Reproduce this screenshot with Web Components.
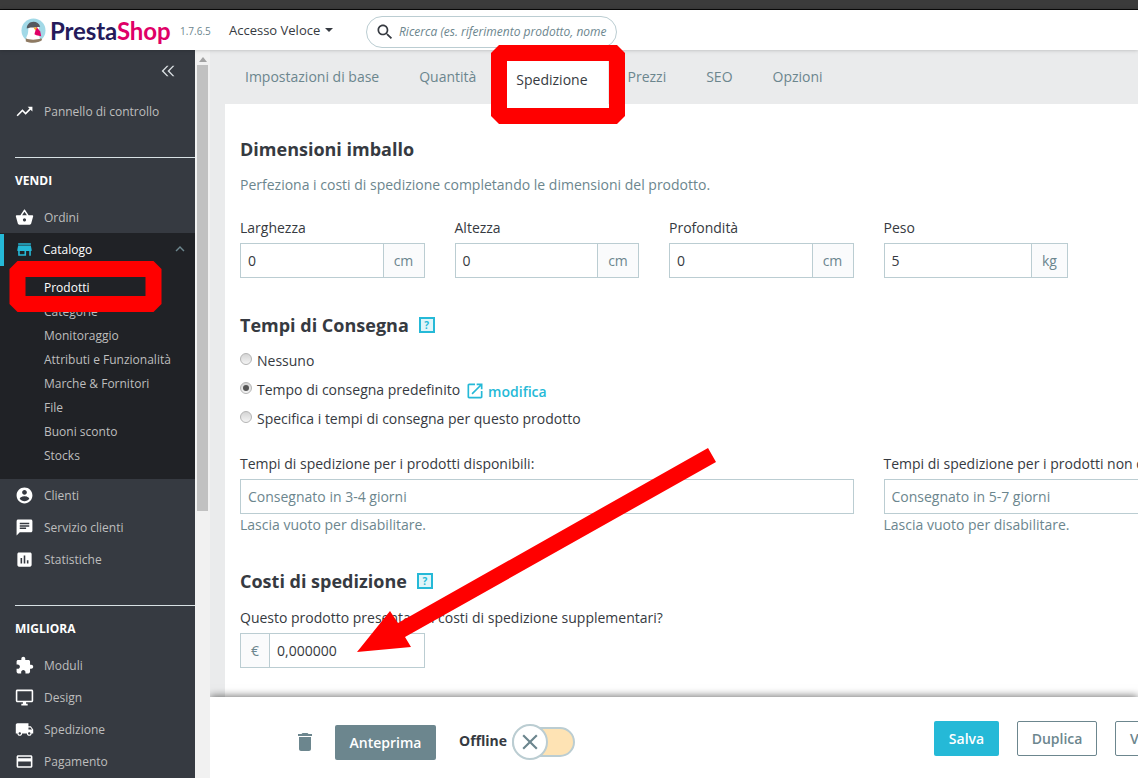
<!DOCTYPE html>
<html lang="it">
<head>
<meta charset="utf-8">
<title>PrestaShop</title>
<style>
  html, body { margin: 0; height: 100%; overflow: hidden; }
  body { font-family: "Open Sans", sans-serif; color: #363a41; background: #eaebec; }
</style>
</head>
<body>
<ps-page>
  <ps-header slot="header"></ps-header>
  <ps-sidebar slot="sidebar">
    <ps-nav-item icon="trend">Pannello di controllo</ps-nav-item>
    <ps-nav-title>VENDI</ps-nav-title>
    <ps-nav-item icon="basket">Ordini</ps-nav-item>
    <ps-nav-group icon="store" label="Catalogo">
      <ps-nav-sub active>Prodotti</ps-nav-sub>
      <ps-nav-sub>Categorie</ps-nav-sub>
      <ps-nav-sub>Monitoraggio</ps-nav-sub>
      <ps-nav-sub>Attributi e Funzionalità</ps-nav-sub>
      <ps-nav-sub>Marche &amp; Fornitori</ps-nav-sub>
      <ps-nav-sub>File</ps-nav-sub>
      <ps-nav-sub>Buoni sconto</ps-nav-sub>
      <ps-nav-sub>Stocks</ps-nav-sub>
    </ps-nav-group>
    <ps-nav-item icon="account">Clienti</ps-nav-item>
    <ps-nav-item icon="chat">Servizio clienti</ps-nav-item>
    <ps-nav-item icon="stats">Statistiche</ps-nav-item>
    <ps-nav-title>MIGLIORA</ps-nav-title>
    <ps-nav-item icon="puzzle">Moduli</ps-nav-item>
    <ps-nav-item icon="desktop">Design</ps-nav-item>
    <ps-nav-item icon="truck">Spedizione</ps-nav-item>
    <ps-nav-item icon="card">Pagamento</ps-nav-item>
  </ps-sidebar>
  <ps-scrollbar slot="scrollbar"></ps-scrollbar>
  <ps-tabs slot="tabs"></ps-tabs>
  <ps-shipping-form slot="content"></ps-shipping-form>
  <ps-footer slot="footer"></ps-footer>
</ps-page>
<ps-markup></ps-markup>

<script>
const ICONS = {
  trend: 'M16 6l2.29 2.29-4.88 4.88-4-4L2 16.59 3.41 18l6-6 4 4 6.3-6.29L22 12V6z',
  basket: 'M17.21 9l-4.38-6.56c-.19-.28-.51-.42-.83-.42-.32 0-.64.14-.83.43L6.79 9H2c-.55 0-1 .45-1 1 0 .09.01.18.04.27l2.54 9.27c.23.84 1 1.46 1.92 1.46h13c.92 0 1.69-.62 1.93-1.46l2.54-9.27L23 10c0-.55-.45-1-1-1h-4.79zM9 9l3-4.4L15 9H9zm3 8c-1.1 0-2-.9-2-2s.9-2 2-2 2 .9 2 2-.9 2-2 2z',
  store: 'M20 4H4v2h16V4zm1 10v-2l-1-5H4l-1 5v2h1v6h10v-6h4v6h2v-6h1zm-9 4H6v-4h6v4z',
  account: 'M12 2C6.48 2 2 6.48 2 12s4.48 10 10 10 10-4.48 10-10S17.52 2 12 2zm0 3c1.66 0 3 1.34 3 3s-1.34 3-3 3-3-1.34-3-3 1.34-3 3-3zm0 14.2c-2.5 0-4.71-1.28-6-3.22.03-1.99 4-3.08 6-3.08 1.99 0 5.97 1.09 6 3.08-1.29 1.94-3.5 3.22-6 3.22z',
  chat: 'M20 2H4c-1.1 0-1.99.9-1.99 2L2 22l4-4h14c1.1 0 2-.9 2-2V4c0-1.1-.9-2-2-2zM6 9h12v2H6V9zm8 5H6v-2h8v2zm4-6H6V6h12v2z',
  stats: 'M19 3H5c-1.1 0-2 .9-2 2v14c0 1.1.9 2 2 2h14c1.1 0 2-.9 2-2V5c0-1.1-.9-2-2-2zM9 17H7v-7h2v7zm4 0h-2V7h2v10zm4 0h-2v-4h2v4z',
  puzzle: 'M20.5 11H19V7c0-1.1-.9-2-2-2h-4V3.5C13 2.12 11.88 1 10.5 1S8 2.12 8 3.5V5H4c-1.1 0-1.99.9-1.99 2v3.8H3.5c1.49 0 2.7 1.21 2.7 2.7s-1.21 2.7-2.7 2.7H2V20c0 1.1.9 2 2 2h3.8v-1.5c0-1.49 1.21-2.7 2.7-2.7 1.49 0 2.7 1.21 2.7 2.7V22H17c1.1 0 2-.9 2-2v-4h1.5c1.38 0 2.5-1.12 2.5-2.5S21.88 11 20.5 11z',
  desktop: 'M21 2H3c-1.1 0-2 .9-2 2v12c0 1.1.9 2 2 2h7v2H8v2h8v-2h-2v-2h7c1.1 0 2-.9 2-2V4c0-1.1-.9-2-2-2zm0 14H3V4h18v12z',
  truck: 'M20 8h-3V4H3c-1.1 0-2 .9-2 2v11h2c0 1.66 1.34 3 3 3s3-1.34 3-3h6c0 1.66 1.34 3 3 3s3-1.34 3-3h2v-5l-3-4zM6 18.5c-.83 0-1.5-.67-1.5-1.5s.67-1.5 1.5-1.5 1.5.67 1.5 1.5-.67 1.5-1.5 1.5zm13.5-9l1.96 2.5H17V9.5h2.5zm-1.5 9c-.83 0-1.5-.67-1.5-1.5s.67-1.5 1.5-1.5 1.5.67 1.5 1.5-.67 1.5-1.5 1.5z',
  card: 'M20 4H4c-1.11 0-1.99.89-1.99 2L2 18c0 1.11.89 2 2 2h16c1.11 0 2-.89 2-2V6c0-1.11-.89-2-2-2zm0 14H4v-6h16v6zm0-10H4V6h16v2z',
  open: 'M19 19H5V5h7V3H5c-1.11 0-2 .9-2 2v14c0 1.1.89 2 2 2h14c1.1 0 2-.9 2-2v-7h-2v7zM14 3v2h3.59l-9.83 9.83 1.41 1.41L19 6.41V10h2V3h-7z',
  trash: 'M6 19c0 1.1.9 2 2 2h8c1.1 0 2-.9 2-2V7H6v12zM19 4h-3.5l-1-1h-5l-1 1H5v2h14V4z',
  search: 'M15.5 14h-.79l-.28-.27C15.41 12.59 16 11.11 16 9.5 16 5.91 13.09 3 9.5 3S3 5.91 3 9.5 5.91 16 9.5 16c1.61 0 3.09-.59 4.23-1.57l.27.28v.79l5 4.99L20.49 19l-4.99-5zm-6 0C7.01 14 5 11.99 5 9.5S7.01 5 9.5 5 14 7.01 14 9.5 11.99 14 9.5 14z',
  close: 'M19 6.41L17.59 5 12 10.59 6.41 5 5 6.41 10.59 12 5 17.59 6.41 19 12 13.41 17.59 19 19 17.59 13.41 12z',
  up: 'M7.41 15.41L12 10.83l4.59 4.58L18 14l-6-6-6 6z',
  back: 'M10 3L1 12l9 9h3l-8.500-9L13 3z M20 3l-9 9 9 9h3l-8.500-9L23 3z'
};

class PsIcon extends HTMLElement {
  constructor() {
    super();
    const size = this.getAttribute('size') || 24;
    const name = this.getAttribute('name');
    this.attachShadow({ mode: 'open' }).innerHTML = `
      <style>
        :host { display: inline-flex; flex: none; width: ${size}px; height: ${size}px; color: inherit; }
        svg { width: 100%; height: 100%; fill: currentColor; display: block; }
      </style>
      <svg viewBox="0 0 24 24"><path d="${ICONS[name]}"></path></svg>`;
  }
}
customElements.define('ps-icon', PsIcon);

class PsPage extends HTMLElement {
  constructor() {
    super();
    this.attachShadow({ mode: 'open' }).innerHTML = `
      <style>
        :host { display: flex; flex-direction: column; height: 778px; overflow: hidden; }
        .topbar { flex: none; height: 9px; background: #3b3b3b; border-bottom: 1px solid #0a0a0a; }
        .body { flex: 1; min-height: 0; display: flex; }
        .main { flex: 1; min-width: 0; display: flex; flex-direction: column; background: #eaebec; overflow: hidden; }
        .scroll { flex: 1; min-height: 0; overflow: hidden; display: flex; flex-direction: column; }
        .card { flex: 1; margin-left: 15px; background: #fff; overflow: hidden; }
      </style>
      <div class="topbar"></div>
      <slot name="header"></slot>
      <div class="body">
        <slot name="sidebar"></slot>
        <slot name="scrollbar"></slot>
        <div class="main">
          <div class="scroll">
            <slot name="tabs"></slot>
            <div class="card"><slot name="content"></slot></div>
          </div>
          <slot name="footer"></slot>
        </div>
      </div>`;
  }
}
customElements.define('ps-page', PsPage);

class PsHeader extends HTMLElement {
  constructor() {
    super();
    this.attachShadow({ mode: 'open' }).innerHTML = `
      <style>
        :host { display: flex; flex: none; align-items: center; height: 40px; background: #fff; position: relative; z-index: 3; box-shadow: 0 0 4px rgba(0,0,0,.25); font-size: 13px; }
        .logo { display: flex; align-items: center; margin-left: 21px; width: 159px; flex: none; }
        .logo svg { width: 25px; height: 25px; flex: none; }
        .word { margin-left: 4px; font-family: Lato, sans-serif; font-weight: 700; font-size: 24px; letter-spacing: -.1px; color: #251b5b; }
        .word b { font-weight: 700; color: #df0067; }
        .ver { font-size: 10px; color: #6c868e; width: 49px; flex: none; margin-top: 2px; }
        .quick { color: #363a41; display: flex; align-items: center; gap: 5px; width: 137px; flex: none; }
        .caret { width: 0; height: 0; border: 4.500px solid transparent; border-top-color: #363a41; border-bottom: 0; }
        .search { width: 251px; height: 32px; box-sizing: border-box; border: 1px solid #bbcdd2; border-radius: 16px; display: flex; align-items: center; padding-left: 8px; overflow: hidden; flex: none; margin-top: 3px; }
        .search ps-icon { color: #363a41; }
        .search span { margin-left: 4px; white-space: nowrap; font-style: italic; font-size: 12px; color: #6c868e; }
      </style>
      <div class="logo">
        <svg viewBox="0 0 26 26">
          <circle cx="13" cy="13" r="12.500" fill="#a2d9e7"/>
          <path d="M5 24c0-3 1-5 2-7 1-3 0-7 2-10 2-2 7-2 9 0 1 2 1 4 0 6l1 6 1 4c-4 3-11 3-15 1z" fill="#fff"/>
          <path d="M6 11c0-4 3-7 7-7 3 0 6 2 7 5l-6 1c-3 0-5 0-8 1z" fill="#55595e"/>
          <path d="M5 21c4 2 11 2 16 0l1 2c-4 3.500-12 3.500-17 1.500z" fill="#8f7a62"/>
          <path d="M16 9l4 5 1 5-5-1-2-1z" fill="#df0067"/>
          <path d="M13 10l4 0-2 3z" fill="#f6a623"/>
        </svg>
        <span class="word">Presta<b>Shop</b></span>
      </div>
      <span class="ver">1.7.6.5</span>
      <span class="quick">Accesso Veloce <i class="caret"></i></span>
      <div class="search"><ps-icon name="search" size="20"></ps-icon><span>Ricerca (es. riferimento prodotto, nome</span></div>`;
  }
}
customElements.define('ps-header', PsHeader);

class PsSidebar extends HTMLElement {
  constructor() {
    super();
    this.attachShadow({ mode: 'open' }).innerHTML = `
      <style>
        :host { display: block; flex: none; width: 195px; background: #363a41; overflow: hidden; }
        .collapse { height: 45px; display: flex; justify-content: flex-end; align-items: flex-start; padding: 14px 20px 0 0; box-sizing: border-box; color: #d8dde0; }
      </style>
      <div class="collapse"><ps-icon name="back" size="14"></ps-icon></div>
      <slot></slot>`;
  }
}
customElements.define('ps-sidebar', PsSidebar);

class PsNavItem extends HTMLElement {
  constructor() {
    super();
    this.attachShadow({ mode: 'open' }).innerHTML = `
      <style>
        :host { display: flex; align-items: center; height: 32px; font-size: 12px; color: #bebebe; padding-left: 15px; }
        ps-icon { color: #fff; margin-right: 10px; }
      </style>
      <ps-icon name="${this.getAttribute('icon')}" size="19"></ps-icon><slot></slot>`;
  }
}
customElements.define('ps-nav-item', PsNavItem);

class PsNavTitle extends HTMLElement {
  constructor() {
    super();
    this.attachShadow({ mode: 'open' }).innerHTML = `
      <style>
        :host { display: flex; align-items: center; height: 44px; margin: 30px 0 0 15px; padding-top: 1px; box-sizing: border-box; border-top: 1px solid #d8e1e4; font-size: 12px; font-weight: 700; color: #fff; }
      </style>
      <slot></slot>`;
  }
}
customElements.define('ps-nav-title', PsNavTitle);

class PsNavGroup extends HTMLElement {
  constructor() {
    super();
    this.attachShadow({ mode: 'open' }).innerHTML = `
      <style>
        :host { display: block; background: #202226; padding-bottom: 12px; }
        .head { height: 32px; display: flex; align-items: center; font-size: 12px; color: #fff; padding-left: 15px; position: relative; }
        .head::before { content: ""; position: absolute; left: 0; top: 1px; width: 4px; height: 32px; background: #25b9d7; }
        .store { color: #25b9d7; margin-right: 9px; }
        .chev { color: #6c868e; margin-left: auto; margin-right: 6px; }
        .subs { padding-top: 10px; }
      </style>
      <div class="head">
        <ps-icon class="store" name="store" size="19"></ps-icon>
        ${this.getAttribute('label')}
        <ps-icon class="chev" name="up" size="18"></ps-icon>
      </div>
      <div class="subs"><slot></slot></div>`;
  }
}
customElements.define('ps-nav-group', PsNavGroup);

class PsNavSub extends HTMLElement {
  constructor() {
    super();
    const color = this.hasAttribute('active') ? '#fff' : '#bebebe';
    this.attachShadow({ mode: 'open' }).innerHTML = `
      <style>
        :host { display: flex; align-items: center; height: 24px; padding-left: 44px; font-size: 12px; color: ${color}; }
      </style>
      <slot></slot>`;
  }
}
customElements.define('ps-nav-sub', PsNavSub);

class PsScrollbar extends HTMLElement {
  constructor() {
    super();
    this.attachShadow({ mode: 'open' }).innerHTML = `
      <style>
        :host { display: flex; flex-direction: column; align-items: center; flex: none; width: 15px; background: #f1f1f1; }
        .arrow { width: 0; height: 0; margin: 7px 0 3px; border: 4px solid transparent; border-bottom: 5px solid #a3a3a3; border-top: 0; }
        .thumb { width: 11px; height: 446px; background: #c1c1c1; }
      </style>
      <div class="arrow"></div>
      <div class="thumb"></div>`;
  }
}
customElements.define('ps-scrollbar', PsScrollbar);

class PsTabs extends HTMLElement {
  constructor() {
    super();
    const tabs = ['Impostazioni di base', 'Quantità', 'Spedizione', 'Prezzi', 'SEO', 'Opzioni'];
    this.attachShadow({ mode: 'open' }).innerHTML = `
      <style>
        :host { display: flex; flex: none; height: 54px; padding-left: 15px; font-size: 14px; color: #6c868e; }
        a { padding: 17px 20px 0; line-height: 20px; }
        a.on { background: #fff; color: #363a41; margin-top: 10px; padding-top: 10px; }
      </style>
      ${tabs.map(t => `<a class="${t === 'Spedizione' ? 'on' : ''}">${t}</a>`).join('')}`;
  }
}
customElements.define('ps-tabs', PsTabs);

class PsHelp extends HTMLElement {
  constructor() {
    super();
    this.attachShadow({ mode: 'open' }).innerHTML = `
      <style>
        :host { display: inline-flex; align-items: center; justify-content: center; box-sizing: border-box; width: 16px; height: 16px; border: 2px solid #25b9d7; background: #e0f5f9; color: #25b9d7; font-size: 10px; font-weight: 700; }
      </style>?`;
  }
}
customElements.define('ps-help', PsHelp);

class PsField extends HTMLElement {
  constructor() {
    super();
    const label = this.getAttribute('label');
    const value = this.getAttribute('value') || '';
    const hint = this.getAttribute('placeholder');
    const pre = this.getAttribute('prefix');
    const suf = this.getAttribute('suffix');
    const addonW = this.getAttribute('addon') || 41;
    const help = this.getAttribute('help');
    this.attachShadow({ mode: 'open' }).innerHTML = `
      <style>
        :host { display: block; min-width: 0; }
        .label { height: 20px; line-height: 20px; font-size: 14px; color: #363a41; margin-bottom: 5px; white-space: nowrap; }
        .box { display: flex; height: 35px; box-sizing: border-box; border: 1px solid #bbcdd2; font-size: 14px; }
        .val { flex: 1; min-width: 0; padding-left: 7px; line-height: 33px; color: #363a41; white-space: nowrap; }
        .val.hint { color: #6c868e; }
        .add { flex: none; width: ${addonW}px; box-sizing: border-box; background: #fafbfc; color: #6c868e; text-align: center; line-height: 33px; }
        .add.l { border-right: 1px solid #bbcdd2; }
        .add.r { border-left: 1px solid #bbcdd2; }
        .help { height: 20px; line-height: 20px; margin-top: 1px; font-size: 14px; color: #6c868e; white-space: nowrap; }
      </style>
      <div class="label">${label}</div>
      <div class="box">
        ${pre ? `<div class="add l">${pre}</div>` : ''}
        <div class="val ${hint ? 'hint' : ''}">${hint || value}</div>
        ${suf ? `<div class="add r">${suf}</div>` : ''}
      </div>
      ${help ? `<div class="help">${help}</div>` : ''}`;
  }
}
customElements.define('ps-field', PsField);

class PsRadio extends HTMLElement {
  constructor() {
    super();
    const on = this.hasAttribute('checked');
    this.attachShadow({ mode: 'open' }).innerHTML = `
      <style>
        :host { display: flex; align-items: center; height: 29px; font-size: 14px; color: #363a41; white-space: nowrap; }
        .dot { flex: none; width: 12px; height: 12px; box-sizing: border-box; border-radius: 50%; border: 1px solid #b4b4b4; background: linear-gradient(#d4d4d4, #f4f4f4); margin: -3px 5px 0 0; display: flex; align-items: center; justify-content: center; }
        .dot i { width: 6px; height: 6px; border-radius: 50%; background: #555; display: ${on ? 'block' : 'none'}; }
      </style>
      <span class="dot"><i></i></span><slot></slot>`;
  }
}
customElements.define('ps-radio', PsRadio);

class PsShippingForm extends HTMLElement {
  constructor() {
    super();
    this.attachShadow({ mode: 'open' }).innerHTML = `
      <style>
        :host { display: block; padding: 33px 0 0 15px; }
        h2 { margin: 0; height: 24px; line-height: 24px; font-size: 18px; font-weight: 700; color: #363a41; display: flex; align-items: center; white-space: nowrap; }
        h2 ps-help { margin-left: 10px; }
        p { margin: 14px 0 0; line-height: 20px; font-size: 14px; color: #6c868e; }
        .dims { display: grid; grid-template-columns: repeat(4, 184.500px); column-gap: 30px; margin-top: 23px; }
        .radios { margin-top: 9px; }
        .link { display: inline-flex; align-items: center; gap: 3px; color: #25b9d7; font-weight: 600; margin: 3px 0 0 5px; }
        .times { display: grid; grid-template-columns: 613.500px 613.500px; column-gap: 30px; margin-top: 21px; }
        .first { margin-top: 35px; }
        .costs { margin-top: 34px; }
        .extra { width: 184.500px; margin-top: 15px; }
      </style>
      <h2>Dimensioni imballo</h2>
      <p>Perfeziona i costi di spedizione completando le dimensioni del prodotto.</p>
      <div class="dims">
        <ps-field label="Larghezza" value="0" suffix="cm"></ps-field>
        <ps-field label="Altezza" value="0" suffix="cm"></ps-field>
        <ps-field label="Profondità" value="0" suffix="cm"></ps-field>
        <ps-field label="Peso" value="5" suffix="kg" addon="36"></ps-field>
      </div>
      <h2 class="first">Tempi di Consegna <ps-help></ps-help></h2>
      <div class="radios">
        <ps-radio>Nessuno</ps-radio>
        <ps-radio checked>Tempo di consegna predefinito <span class="link"><ps-icon name="open" size="20"></ps-icon>modifica</span></ps-radio>
        <ps-radio>Specifica i tempi di consegna per questo prodotto</ps-radio>
      </div>
      <div class="times">
        <ps-field label="Tempi di spedizione per i prodotti disponibili:" placeholder="Consegnato in 3-4 giorni" help="Lascia vuoto per disabilitare."></ps-field>
        <ps-field label="Tempi di spedizione per i prodotti non disponibili:" placeholder="Consegnato in 5-7 giorni" help="Lascia vuoto per disabilitare."></ps-field>
      </div>
      <h2 class="costs">Costi di spedizione <ps-help></ps-help></h2>
      <div class="extra">
        <ps-field label="Questo prodotto presenta dei costi di spedizione supplementari?" value="0,000000" prefix="€" addon="29"></ps-field>
      </div>`;
  }
}
customElements.define('ps-shipping-form', PsShippingForm);

class PsFooter extends HTMLElement {
  constructor() {
    super();
    this.attachShadow({ mode: 'open' }).innerHTML = `
      <style>
        :host { display: flex; flex: none; height: 81px; background: #fff; position: relative; z-index: 2; box-shadow: 0 -1px 8px rgba(0,0,0,.55); overflow: hidden; padding-left: 83px; font-size: 14px; align-items: center; }
        .left { display: flex; align-items: center; margin-top: 9px; flex: none; }
        .trash { color: #6c868e; margin-right: 18px; }
        .btn { flex: none; height: 35px; box-sizing: border-box; border-radius: 2px; display: flex; align-items: center; justify-content: center; font-weight: 600; white-space: nowrap; }
        .dark { width: 101px; background: #6c868e; color: #fff; }
        .status { font-weight: 700; color: #363a41; margin: -4px 5px 0 23px; }
        .switch { position: relative; width: 63px; height: 30px; box-sizing: border-box; border: 2px solid #bbcdd2; border-radius: 15px; background: #fee3b4; flex: none; }
        .knob { position: absolute; left: -2px; top: -5px; width: 36px; height: 36px; box-sizing: border-box; border: 2px solid #bbcdd2; border-radius: 50%; background: #fff; color: #6c868e; display: flex; align-items: center; justify-content: center; }
        .right { display: flex; gap: 18px; margin-left: 359px; margin-top: 1px; flex: none; }
        .cyan { width: 65px; background: #25b9d7; color: #fff; }
        .line { border: 1px solid #6c868e; color: #6c868e; padding: 0 14px; }
        .line.dup { width: 80px; padding: 0; }
      </style>
      <div class="left">
        <ps-icon class="trash" name="trash"></ps-icon>
        <div class="btn dark">Anteprima</div>
        <span class="status">Offline</span>
        <div class="switch"><div class="knob"><ps-icon name="close" size="26"></ps-icon></div></div>
      </div>
      <div class="right">
        <div class="btn cyan">Salva</div>
        <div class="btn line dup">Duplica</div>
        <div class="btn line">Vai al catalogo</div>
      </div>`;
  }
}
customElements.define('ps-footer', PsFooter);

// the red marks drawn over the screenshot, free canvas
class PsMarkup extends HTMLElement {
  constructor() {
    super();
    this.attachShadow({ mode: 'open' }).innerHTML = `
      <style>
        :host { position: absolute; left: 0; top: 0; width: 1138px; height: 778px; z-index: 10; pointer-events: none; }
        svg { display: block; width: 100%; height: 100%; }
        rect { fill: none; stroke: #f00; stroke-width: 16; stroke-linejoin: bevel; }
      </style>
      <svg viewBox="0 0 1138 778">
        <rect x="499" y="53" width="118" height="63"></rect>
        <rect x="17.500" y="269" width="136" height="35"></rect>
        <polygon fill="#f00" points="708,448 716,462 405,637 411,647 357,652 390,611 398,623"></polygon>
      </svg>`;
  }
}
customElements.define('ps-markup', PsMarkup);
</script>
</body>
</html>
